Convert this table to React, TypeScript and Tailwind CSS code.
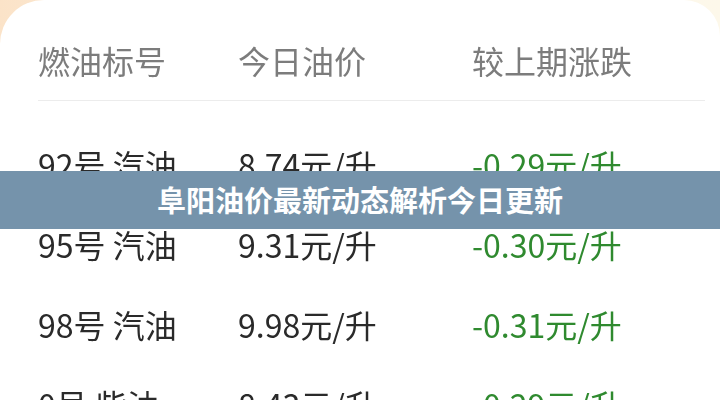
import React from "react";

const rows = [
  { name: "92号 汽油", price: "8.74元/升", diff: "-0.29元/升" },
  { name: "95号 汽油", price: "9.31元/升", diff: "-0.30元/升" },
  { name: "98号 汽油", price: "9.98元/升", diff: "-0.31元/升" },
  { name: "0号 柴油", price: "8.43元/升", diff: "-0.29元/升" },
];

export default function App() {
  return (
    <div
      className="relative w-[720px] h-[400px] overflow-hidden bg-gradient-to-r from-[#fbe3c8] via-[#fdf6ee] to-[#fdf8ea]"
      style={{ fontFamily: '"Noto Sans CJK SC", "Noto Sans", sans-serif' }}
    >
      <div className="h-[460px] w-[720px] rounded-tl-[44px] rounded-tr-[36px] bg-white blur-[0.4px]">
        <div className="flex h-[98px] items-center pt-[22px] pl-[38px] text-[32px] text-[#7c7c7c]">
          <div className="w-[200px]">燃油标号</div>
          <div className="w-[234px]">今日油价</div>
          <div>较上期涨跌</div>
        </div>
        <div className="ml-[38px] mr-[15px] mt-[2px] border-b border-[#ececec]" />
        <div className="pt-[23px]">
          {rows.map((r) => (
            <div key={r.name} className="flex h-[80px] items-center pl-[38px] text-[32px]">
              <div className="w-[200px] text-[#2a2a2a]">{r.name}</div>
              <div className="w-[234px] text-[#2a2a2a]">{r.price}</div>
              <div className="text-[#2f8a2f]">{r.diff}</div>
            </div>
          ))}
        </div>
      </div>
      <div className="absolute left-0 right-0 top-[171px] flex h-[58px] items-center justify-center bg-[#7593ab]">
        <span className="text-[29px] font-bold text-white">阜阳油价最新动态解析今日更新</span>
      </div>
    </div>
  );
}
